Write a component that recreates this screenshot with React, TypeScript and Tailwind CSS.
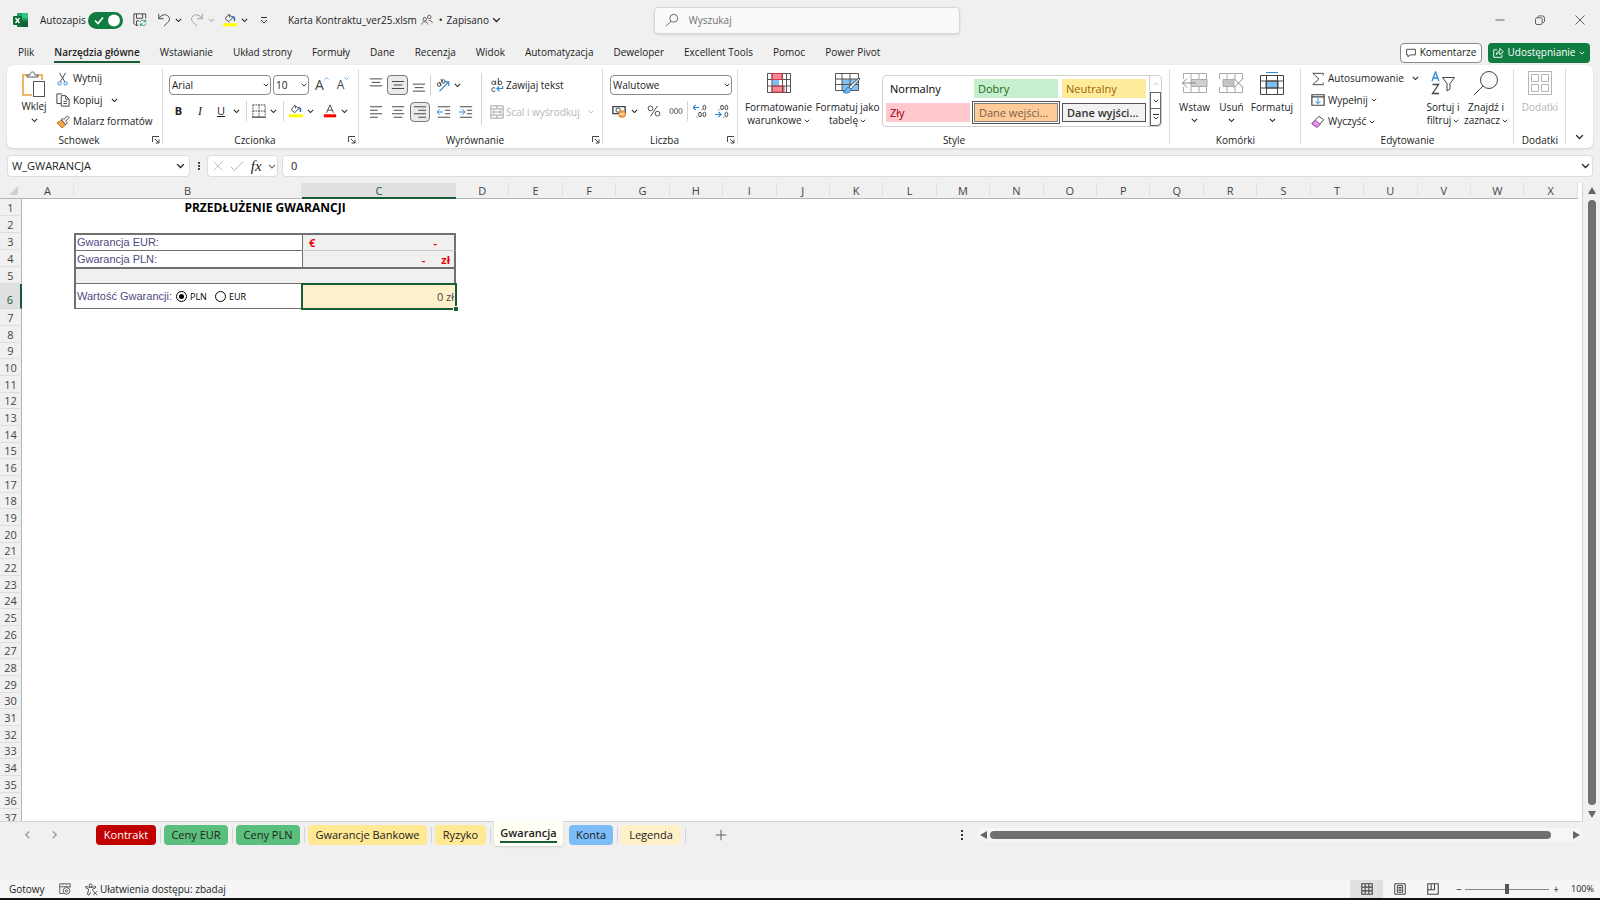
import type { ReactNode } from "react";

function Chev({ className = "w-[7px]" }: { className?: string }) {
    return (
        <svg viewBox="0 0 8 5" fill="none" stroke="currentColor" strokeWidth="1.2" className={`shrink-0 ${className}`}>
            <path d="M1 1l3 3 3-3" />
        </svg>
    )
}

function Icon({ size = 14, children, className = "" }: { size?: number, children: ReactNode, className?: string }) {
    return (
        <svg width={size} height={size} viewBox="0 0 16 16" fill="none" stroke="#444" strokeWidth="1.1" className={`shrink-0 ${className}`}>
            {children}
        </svg>
    )
}

function FillIcon() {
    return (
        <Icon>
            <path d="M7 1L2.500 6.500 6.500 10 11 5.500 7.500 2v3" />
            <path d="M10.500 4c2.500 0 3 2 2.500 5" stroke="#2563b8" strokeWidth="1.8" />
            <path d="M0 13.500h16" stroke="#ffff00" strokeWidth="3.500" />
        </Icon>
    )
}

function Lines({ rows }: { rows: number[][] }) {
    return (
        <Icon>
            {rows.map(([x, y, w]) => <path key={y} d={`M${x} ${y}h${w}`} />)}
        </Icon>
    )
}

function Divider({ className = "h-5" }: { className?: string }) {
    return <span className={`w-px shrink-0 bg-[#d4d4d4] ${className}`} />
}

function Group({ label, width, launcher = false, children }: { label: string, width: string, launcher?: boolean, children: ReactNode }) {
    return (
        <section aria-label={label} className={`relative flex flex-col ${width}`}>
            <div className="h-[67px]">{children}</div>
            <div className={`h-4 text-center leading-4 ${launcher ? "pr-3" : ""}`}>{label}</div>
            {launcher &&
                <button aria-label={`${label}: ustawienia`} className="absolute right-[3px] bottom-1">
                    <svg width="8" height="8" viewBox="0 0 8 8" fill="none" stroke="#444">
                        <path d="M.5 6V.5H7M3 3l4 4M7 3.500V7H3.500" />
                    </svg>
                </button>
            }
            <span className="absolute top-1 right-0 bottom-1 w-px bg-[#dadada]" />
        </section>
    )
}

function BigButton({ icon, lines, width, below = false, disabled = false }: { icon: ReactNode, lines: string[], width: string, below?: boolean, disabled?: boolean }) {
    return (
        <button disabled={disabled} className={`flex shrink-0 flex-col items-center ${width} ${disabled ? "text-[#b5b5b5]" : ""}`}>
            <span className="flex h-7 items-center">{icon}</span>
            <span className="mt-1 leading-[13px]">{lines[0]}</span>
            {below && <Chev className="mt-1 w-[7px]" />}
            {lines[1] &&
                <span className="flex items-center gap-[2px] leading-[13px]">{lines[1]}<Chev className="w-[6px]" /></span>
            }
        </button>
    )
}

function TitleBar() {
    return (
        <header className="grid h-10 grid-cols-[1fr_306px_1fr] items-center pl-[13px]">
            <div className="flex min-w-0 items-center whitespace-nowrap">
                <svg width="15" height="14" viewBox="0 0 15 14">
                    <rect x="4" width="11" height="14" rx="1" fill="#21a366" />
                    <path d="M9 0h5a1 1 0 011 1v4H9z" fill="#33c481" />
                    <path d="M4 7h11v6a1 1 0 01-1 1H5a1 1 0 01-1-1z" fill="#107c41" />
                    <path d="M9 9h6v4a1 1 0 01-1 1H9z" fill="#185c37" />
                    <rect y="3" width="9" height="9" rx="1" fill="#0e6b38" />
                    <path d="M2.500 5l4 5M6.500 5l-4 5" stroke="#fff" strokeWidth="1.300" />
                </svg>
                <label htmlFor="autosave" className="ml-3 w-[42px]">Autozapis</label>
                <span className="relative ml-[6px] h-[17px] w-[35px]">
                    <input id="autosave" type="checkbox" defaultChecked className="block h-full w-full appearance-none rounded-full bg-[#107c41]" />
                    <svg viewBox="0 0 35 17" className="pointer-events-none absolute inset-0">
                        <path d="M7 8.500l3 3 5-6" fill="none" stroke="#fff" strokeWidth="1.600" />
                        <circle cx="26" cy="8.500" r="6" fill="#fff" />
                    </svg>
                </span>
                <button aria-label="Zapisz" className="ml-[10px]">
                    <Icon>
                        <path d="M6 14H3l-2-2V1h13.500v5M4 1v5h7V1M4 14V9h3" />
                        <path d="M8 10.500c1-3 5-3 6.500-.5M14.500 7.500V10H12M15 12c-1 3-5 3-6.500.500M8.500 15v-2.500H11" stroke="#2a9d58" />
                    </Icon>
                </button>
                <button aria-label="Cofnij" className="ml-[10px] flex items-center gap-1">
                    <Icon className="-mt-px"><path d="M2 1v5.500h5.500M2 6.500C5 2 9 1 12 3c3.500 2.500 2.500 6 0 8l-4 4" /></Icon>
                    <Chev />
                </button>
                <button aria-label="Ponów" disabled className="ml-2 flex items-center gap-1 text-[#b0b0b0]">
                    <Icon className="opacity-50"><path d="M14 1v5.500H8.500M14 6.500C11 2 7 1 4 3 .5 5.500 1.500 9 4 11l4 4" /></Icon>
                    <Chev />
                </button>
                <button aria-label="Kolor wypełnienia" className="ml-2 flex items-center gap-1"><FillIcon /><Chev /></button>
                <button aria-label="Dostosuj" className="ml-3">
                    <svg width="8" height="8" viewBox="0 0 8 8" fill="none" stroke="#333"><path d="M1 1.500h6M1 4l3 3 3-3" /></svg>
                </button>
                <span className="ml-5">Karta Kontraktu_ver25.xlsm</span>
                <Icon size={12} className="ml-1">
                    <circle cx="5" cy="7" r="2.300" /><circle cx="11" cy="4" r="2.300" />
                    <path d="M1 14c0-5 8-5 8 0M10 9c2-1 5 0 5 3" />
                </Icon>
                <span className="ml-[6px]">•</span>
                <button className="ml-1 flex items-center gap-[3px]">Zapisano <Chev className="w-[9px]" /></button>
            </div>
            <div className="flex h-[27px] items-center rounded-sm border border-[#d6d6d6] bg-[#fafafa] px-[10px] shadow-sm">
                <Icon className="opacity-80"><circle cx="10" cy="6" r="4.500" /><path d="M7 9.500L1 15" /></Icon>
                <input aria-label="Wyszukaj" placeholder="Wyszukaj" className="ml-[10px] w-full bg-transparent outline-none placeholder:text-[#707070]" />
            </div>
            <div className="flex items-center justify-end gap-7 pr-[14px]">
                <button aria-label="Minimalizuj"><Icon size={12}><path d="M2 8h12" /></Icon></button>
                <button aria-label="Przywróć"><Icon size={12}><rect x="2" y="5" width="9" height="9" rx="2" /><path d="M5 4.500c0-1 1-2 2-2h4a3 3 0 013 3v4c0 1-1 2-2 2" /></Icon></button>
                <button aria-label="Zamknij"><Icon size={12}><path d="M2 2l12 12M14 2L2 14" /></Icon></button>
            </div>
        </header>
    )
}

const menu = ["Plik", "Narzędzia główne", "Wstawianie", "Układ strony", "Formuły", "Dane", "Recenzja", "Widok", "Automatyzacja", "Deweloper", "Excellent Tools", "Pomoc", "Power Pivot"];

function MenuBar() {
    return (
        <nav className="flex h-[25px] items-center pr-[10px] pl-[18px]">
            <div className="flex gap-5">
                {menu.map((item) =>
                    <button key={item} className={item === "Narzędzia główne" ? "border-b-2 border-[#185c37] font-semibold leading-[18px]" : "border-b-2 border-transparent leading-[18px]"}>{item}</button>
                )}
            </div>
            <div className="flex-auto" />
            <button className="flex h-5 w-[82px] items-center justify-center gap-1 rounded border border-[#8a8a8a] bg-white">
                <Icon size={10}><path d="M1 2h14v9H7l-4 3v-3H1z" strokeWidth="1.500" /></Icon>Komentarze
            </button>
            <button className="ml-[6px] flex h-5 w-[102px] items-center justify-center gap-1 rounded bg-[#107c41] text-white">
                <svg width="11" height="11" viewBox="0 0 16 16" fill="none" stroke="#fff" strokeWidth="1.300"><path d="M6 4H1v11h12v-4M5 11c0-4 3-5 5-5V2l5 5-5 4V8.500c-2 0-4 .5-5 2.500z" /></svg>
                Udostępnianie
                <Chev className="w-[6px]" />
            </button>
        </nav>
    )
}

function Clipboard() {
    return (
        <div className="flex pt-[6px] pl-3">
            <button className="flex w-[30px] flex-col items-center">
                <svg width="26" height="27" viewBox="0 0 26 27" fill="none">
                    <path d="M7 4H2v20h9M16 4h5v5" stroke="#e8a33d" strokeWidth="1.600" />
                    <path d="M6 6V4h3c0-4 5-4 5 0h3v2z" stroke="#555" fill="#fff" />
                    <rect x="12.500" y="10.500" width="11" height="15" stroke="#555" fill="#fff" />
                </svg>
                <span className="mt-[2px] leading-[13px]">Wklej</span>
                <Chev className="mt-[5px] w-[7px]" />
            </button>
            <div className="ml-[7px] flex flex-col">
                <button className="flex h-[21px] -mt-[3px] items-center gap-[3px]">
                    <Icon><path d="M4 1l6 10M11 1L5 11" /><circle cx="4" cy="13" r="1.900" stroke="#2b88d8" /><circle cx="11" cy="13" r="1.900" stroke="#2b88d8" /></Icon>
                    Wytnij
                </button>
                <button className="flex h-[22px] items-center gap-[3px]">
                    <Icon><path d="M6 12H1V1h6M6 3h5l4 4v8H6zM11 3v4h4M8.500 9.500h4M8.500 12h4" /></Icon>
                    Kopiuj<Chev className="ml-[6px] w-[7px]" />
                </button>
                <button className="flex h-[21px] items-center gap-[3px]">
                    <Icon><path d="M1 9l5-3 5 5-4 4z" fill="#f3a54b" stroke="#c8711a" /><path d="M6 5l5 6 2-2-2-2 4-4-2-2-4 4-1-1z" fill="#fff" /></Icon>
                    Malarz formatów
                </button>
            </div>
        </div>
    )
}

function FontGroup() {
    return (
        <div className="pt-[10px] pl-[6px]">
            <div className="flex items-center">
                <span className="relative">
                    <select aria-label="Czcionka" className="block h-5 w-[102px] appearance-none rounded border border-[#8a8a8a] bg-white pl-[2px]"><option>Arial</option></select>
                    <Chev className="pointer-events-none absolute top-2 right-[2px] w-[6px]" />
                </span>
                <span className="relative ml-[2px]">
                    <select aria-label="Rozmiar czcionki" className="block h-5 w-9 appearance-none rounded border border-[#8a8a8a] bg-white pl-[2px]"><option>10</option></select>
                    <Chev className="pointer-events-none absolute top-2 right-[2px] w-[6px]" />
                </span>
                <button aria-label="Zwiększ rozmiar" className="ml-[6px] flex text-[14px] leading-4 text-[#444]">A<Chev className="w-[5px] rotate-180 self-start text-[#2b88d8]" /></button>
                <button aria-label="Zmniejsz rozmiar" className="ml-2 flex text-[12px] leading-4 text-[#444]">A<Chev className="w-[5px] self-start text-[#2b88d8]" /></button>
            </div>
            <div className="-ml-px mt-[6px] flex h-5 items-center">
                <button className="w-[21px] text-[11px] font-bold">B</button>
                <button className="w-[22px] font-['Liberation_Serif',serif] text-[12px] italic">I</button>
                <button className="w-5 text-[11px] underline">U</button>
                <Chev className="ml-[2px] w-[7px]" />
                <Divider className="ml-[6px] h-5" />
                <button aria-label="Obramowania" className="ml-[5px] flex items-center gap-1">
                    <Icon><path d="M1 1h14v13M1 1v13M8 1v14M1 8h14" strokeDasharray="2 1" /><path d="M0 15h16" strokeWidth="1.500" /></Icon><Chev />
                </button>
                <Divider className="ml-[6px] h-5" />
                <button aria-label="Kolor wypełnienia komórki" className="ml-[5px] flex items-center gap-1"><FillIcon /><Chev /></button>
                <button aria-label="Kolor czcionki" className="ml-[9px] flex items-center gap-1">
                    <Icon><path d="M4 10l4-9 4 9M5.500 7h5" /><path d="M1 13.500h14" stroke="#f00" strokeWidth="3.500" /></Icon><Chev />
                </button>
            </div>
        </div>
    )
}

function Alignment() {
    return (
        <div className="flex pt-2 pl-2">
            <div className="w-[114px]">
                <div className="flex h-6 items-center">
                    <button aria-label="Do góry" className="w-5 pl-[2px]"><Lines rows={[[1, 1, 14], [3, 5, 10], [1, 9, 14]]} /></button>
                    <button aria-label="Do środka" className="flex h-5 w-[21px] items-center justify-center rounded border border-[#777] bg-[#ebebeb]"><Lines rows={[[1, 4, 14], [3, 8, 10], [1, 12, 14]]} /></button>
                    <button aria-label="Do dołu" className="ml-1 w-[18px]"><Lines rows={[[1, 7, 14], [3, 11, 10], [1, 15, 14]]} /></button>
                    <Divider className="h-5" />
                    <button aria-label="Orientacja" className="ml-[5px] flex items-center gap-1">
                        <Icon>
                            <circle cx="3.500" cy="7.500" r="2" /><path d="M4 4.500l2 4" />
                            <circle cx="8.500" cy="4" r="2" /><path d="M5.500 1l2 4" />
                            <path d="M4 15L14 5M10 4.500h4.500V9" stroke="#2b88d8" strokeWidth="1.400" />
                        </Icon><Chev />
                    </button>
                </div>
                <div className="mt-[3px] flex h-6 items-center">
                    <button aria-label="Do lewej" className="w-[22px] pl-[2px]"><Lines rows={[[1, 2, 14], [1, 6, 9], [1, 10, 14], [1, 14, 9]]} /></button>
                    <button aria-label="Wyśrodkuj" className="w-[21px] pl-[2px]"><Lines rows={[[1, 2, 14], [3, 6, 10], [1, 10, 14], [3, 14, 10]]} /></button>
                    <button aria-label="Do prawej" className="flex h-5 w-5 items-center justify-center rounded border border-[#777] bg-[#ebebeb]"><Lines rows={[[1, 2, 14], [6, 6, 9], [1, 10, 14], [6, 14, 9]]} /></button>
                    <button aria-label="Zmniejsz wcięcie" className="ml-[7px]"><Icon><path d="M1 2h14M9 6h6M9 10h6M1 14h14" /><path d="M0 8h7M3 5L0 8l3 3" stroke="#2b88d8" /></Icon></button>
                    <button aria-label="Zwiększ wcięcie" className="ml-2"><Icon><path d="M1 2h14M9 6h6M9 10h6M1 14h14" /><path d="M0 8h7M4 5l3 3-3 3" stroke="#2b88d8" /></Icon></button>
                </div>
            </div>
            <Divider className="h-[52px]" />
            <div className="pl-2">
                <button className="flex h-6 items-center gap-[2px]">
                    <Icon>
                        <circle cx="4" cy="5.500" r="2" /><path d="M6.500 3v5M9.500 0v8M6 12a2.200 2.200 0 10 0 2.500" />
                        <circle cx="11.500" cy="5.500" r="2" />
                        <path d="M14.500 9v3H8M10.500 9.500L8 12l2.500 3" stroke="#2b88d8" strokeWidth="1.400" />
                    </Icon>
                    Zawijaj tekst
                </button>
                <button disabled className="mt-[3px] flex h-6 items-center gap-[2px] text-[#b5b5b5]">
                    <Icon className="opacity-50"><path d="M1 1h14v14H1zM1 4.500h14M1 11.500h14M8 1v3.500M8 11.500V15M3 8h10M5 6L3 8l2 2M11 6l2 2-2 2" /></Icon>
                    Scal i wyśrodkuj<Chev className="ml-[6px] w-[6px]" />
                </button>
            </div>
        </div>
    )
}

function NumberGroup() {
    return (
        <div className="pt-[10px] pl-[7px]">
            <span className="relative block w-[122px]">
                <select aria-label="Format liczb" className="block h-5 w-full appearance-none rounded border border-[#8a8a8a] bg-white pl-[2px]"><option>Walutowe</option></select>
                <Chev className="pointer-events-none absolute top-2 right-[2px] w-[6px]" />
            </span>
            <div className="mt-[6px] flex h-5 items-center pl-[2px]">
                <button aria-label="Waluta" className="flex items-center gap-[5px]">
                    <Icon><path d="M1 3h14v8H1z" strokeWidth="1.600" /><circle cx="7" cy="7" r="2.500" /><rect x="8" y="8" width="7" height="7" rx="2" fill="#f3a54b" stroke="#d67d1b" /><path d="M8.500 11.500h6" stroke="#fff" /></Icon><Chev />
                </button>
                <button aria-label="Procent" className="ml-[9px]"><Icon><circle cx="4" cy="5" r="2.700" /><circle cx="12" cy="11" r="2.700" /><path d="M12 2L4 14" /></Icon></button>
                <button aria-label="Zapis dziesiętny" className="ml-2 w-[14px]">
                    <svg width="14" height="8" viewBox="0 0 14 8" fill="none" stroke="#777"><ellipse cx="2.500" cy="4" rx="1.700" ry="2.700" /><ellipse cx="7" cy="4" rx="1.700" ry="2.700" /><ellipse cx="11.500" cy="4" rx="1.700" ry="2.700" /></svg>
                </button>
                <Divider className="ml-1 h-5" />
                <button aria-label="Zwiększ dziesiętne" className="ml-[5px]">
                    <Icon><ellipse cx="13" cy="4" rx="1.600" ry="2.600" /><ellipse cx="8" cy="12" rx="1.600" ry="2.600" /><ellipse cx="13" cy="12" rx="1.600" ry="2.600" /><path d="M4 15h1M9.500 6.500h1" /><path d="M0 4h7M3 1L0 4l3 3" stroke="#2b88d8" strokeWidth="1.400" /></Icon>
                </button>
                <button aria-label="Zmniejsz dziesiętne" className="ml-2">
                    <Icon><ellipse cx="8" cy="4" rx="1.600" ry="2.600" /><ellipse cx="13" cy="4" rx="1.600" ry="2.600" /><ellipse cx="13" cy="12" rx="1.600" ry="2.600" /><path d="M4 6.500h1M9.500 15h1" /><path d="M0 12h7M4 9l3 3-3 3" stroke="#2b88d8" strokeWidth="1.400" /></Icon>
                </button>
            </div>
        </div>
    )
}

const styles = [
    { name: "Normalny", look: "bg-white text-black" },
    { name: "Dobry", look: "bg-[#c6efce] text-[#1a6b1a]" },
    { name: "Neutralny", look: "bg-[#ffeb9c] text-[#9c6500]" },
    { name: "Zły", look: "bg-[#ffc7ce] text-[#9c0006]" },
    { name: "Dane wejści...", look: "bg-[#ffcc99] text-[#76604f] border border-[#7f7f7f] outline outline-[#555] outline-offset-1" },
    { name: "Dane wyjści...", look: "bg-[#f2f2f2] text-[#333] font-semibold border border-[#555]" },
];

function StylesGroup() {
    return (
        <div className="flex pt-1 pl-[6px]">
            <BigButton width="w-[69px]" lines={["Formatowanie", "warunkowe"]} icon={
                <svg width="24" height="20" viewBox="0 0 24 20" fill="none">
                    <path d="M5 .5h10v6H5zM5 13h12v6H5z" fill="#f58a94" /><path d="M5 6.500h7V13H5z" fill="#7cc0f5" />
                    <path d="M.5.5h23v19H.5zM.5 6.500h23M.5 13h23M5 .5v19M15.500.5v19M19.500.5v19" stroke="#555" />
                    <path d="M5 .5h10v6H5zM5 13h12v6H5z" stroke="#d9364a" />
                </svg>
            } />
            <BigButton width="w-[69px]" lines={["Formatuj jako", "tabelę"]} icon={
                <svg width="26" height="24" viewBox="0 0 26 24" fill="none">
                    <path d="M7 8h16v11H7z" fill="#83c0f2" />
                    <path d="M.5 2.500h23v17H.5zM.5 8h23M.5 13.500h23M7 2.500v17M15 2.500v17" stroke="#555" />
                    <path d="M24 7L14 16l2 2 9-10z" fill="#fff" stroke="#555" />
                    <path d="M14 16c-3 0-3 4-6 5 3 2 8 1 8-3z" fill="#6fb5ee" stroke="#2b78c0" />
                </svg>
            } />
            <div className="mt-[6px] mr-2 flex h-[52px] min-w-0 flex-1 overflow-hidden rounded border border-[#d0d0d0]">
                <div className="grid flex-1 grid-cols-3 gap-x-1 gap-y-1 py-[3px] pr-[3px] pl-[3px] text-[11px]">
                    {styles.map((s) =>
                        <button key={s.name} className={`h-[19px] truncate pl-1 text-left leading-none ${s.look}`}>{s.name}</button>
                    )}
                </div>
                <div className="flex w-3 flex-col border-l border-[#d0d0d0]">
                    <button aria-label="W górę" className="flex flex-1 items-center justify-center text-[#bbb]"><Chev className="w-[6px] rotate-180" /></button>
                    <button aria-label="W dół" className="flex flex-1 items-center justify-center border border-[#666]"><Chev className="w-[6px]" /></button>
                    <button aria-label="Więcej stylów" className="flex flex-1 flex-col items-center justify-center gap-px rounded-br border border-t-0 border-[#666]"><span className="h-px w-[6px] bg-[#333]" /><Chev className="w-[6px]" /></button>
                </div>
            </div>
        </div>
    )
}

function CellsGroup() {
    return (
        <div className="flex pt-1 pl-[5px]">
            <BigButton width="w-[39px]" below lines={["Wstaw"]} icon={
                <svg width="26" height="20" viewBox="0 0 26 20" fill="none" stroke="#aaa">
                    <path d="M1.500 6V.5h23V6M1.500 14v5.500h23V14M9 .5V6M17 .5V6M9 14v5.500M17 14v5.500" />
                    <path d="M9 6.500h16v7H9z" fill="#d0d0d0" /><path d="M0 10h14M5 5.500L.5 10 5 14.500" stroke="#888" />
                </svg>
            } />
            <BigButton width="w-[35px]" below lines={["Usuń"]} icon={
                <svg width="25" height="20" viewBox="0 0 25 20" fill="none" stroke="#aaa">
                    <path d="M.5 6V.5h23V6M.5 14v5.500h23V14M8 .5V6M16 .5V6M8 14v5.500M16 14v5.500" />
                    <path d="M4 6.500h11v7H4z" fill="#c4c4c4" /><path d="M15 5.500l9 9M24 5.500l-9 9" stroke="#888" />
                </svg>
            } />
            <BigButton width="w-[46px]" below lines={["Formatuj"]} icon={
                <svg width="24" height="24" viewBox="0 0 24 24" fill="none" stroke="#444">
                    <path d="M6 10h12v7H6z" fill="#7cc0f5" />
                    <path d="M.5 4.500h23v19H.5zM.5 10h23M.5 17h23M6.500 4.500v19M17.500 4.500v19" />
                    <path d="M6 1.500h12" stroke="#2b88d8" />
                </svg>
            } />
        </div>
    )
}

function EditGroup() {
    return (
        <div className="flex pl-[10px]">
            <div className="w-[112px] pt-[3px]">
                <button className="flex h-[21px] w-full items-center gap-[3px]">
                    <Icon><path d="M14 4V1.500H2L9 8l-7 6.500h12V12" /></Icon>Autosumowanie<span className="flex-auto" /><Chev className="mr-1 w-[7px]" />
                </button>
                <button className="flex h-[22px] items-center gap-[3px]">
                    <Icon><path d="M1 2h14v12H1zM1 4.500h14" strokeWidth="1.400" /><path d="M8 5.500V12M5 9.500L8 12l3-2.500" stroke="#2b88d8" /></Icon>Wypełnij<Chev className="w-[6px]" />
                </button>
                <button className="flex h-[21px] items-center gap-[3px]">
                    <Icon><path d="M1 10L9 1.500l5.500 4L7 14z" /><path d="M1 10l4-4 5.500 4.500L7 14z" fill="#e29be8" stroke="#a43bb0" /></Icon>Wyczyść<Chev className="w-[6px]" />
                </button>
            </div>
            <div className="flex pt-1">
                <BigButton width="w-10" lines={["Sortuj i", "filtruj"]} icon={
                    <svg width="25" height="24" viewBox="0 0 25 24" fill="none" stroke="#444">
                        <path d="M1 10L4.500 1 8 10M2.300 7h4.500" stroke="#2b88d8" strokeWidth="1.300" />
                        <path d="M1.500 13.500h6l-6 9h6.500" strokeWidth="1.300" />
                        <path d="M11.500 6.500h12l-4.500 6v5.500l-3 2v-7.500z" />
                    </svg>
                } />
                <BigButton width="w-[46px]" lines={["Znajdź i", "zaznacz"]} icon={
                    <svg width="26" height="26" viewBox="0 0 26 26" fill="none" stroke="#444"><circle cx="16" cy="10" r="8.500" fill="#fafafa" /><path d="M10 16l-9 9" /></svg>
                } />
            </div>
        </div>
    )
}

function Ribbon() {
    return (
        <div className="mx-[7px] flex h-[83px] rounded-md bg-white shadow">
            <Group label="Schowek" width="w-[156px]" launcher><Clipboard /></Group>
            <Group label="Czcionka" width="w-[196px]" launcher><FontGroup /></Group>
            <Group label="Wyrównanie" width="w-[244px]" launcher><Alignment /></Group>
            <Group label="Liczba" width="w-[135px]" launcher><NumberGroup /></Group>
            <Group label="Style" width="min-w-0 flex-1"><StylesGroup /></Group>
            <Group label="Komórki" width="w-[131px]"><CellsGroup /></Group>
            <Group label="Edytowanie" width="w-[213px]"><EditGroup /></Group>
            <Group label="Dodatki" width="w-[52px]">
                <div className="pt-1">
                    <BigButton width="w-full" disabled lines={["Dodatki"]} icon={
                        <svg width="24" height="24" viewBox="0 0 24 24" fill="none" stroke="#b5b5b5"><path d="M.5.5h23v23H.5zM3.500 3.500h7v7h-7zM13.500 3.500h7v7h-7zM3.500 13.500h7v7h-7zM13.500 13.500h7v7h-7z" /></svg>
                    } />
                </div>
            </Group>
            <button aria-label="Zwiń wstążkę" className="flex w-[27px] items-end justify-center pb-2"><Chev className="w-[9px]" /></button>
        </div>
    )
}

function FormulaBar() {
    return (
        <div className="mx-[7px] mt-[7px] mb-[6px] flex h-[22px] items-stretch text-[11px]">
            <div className="flex w-[183px] items-center rounded border border-[#dcdcdc] bg-white pr-1">
                <input aria-label="Pole nazwy" defaultValue="W_GWARANCJA" className="w-full min-w-0 bg-transparent pl-1 outline-none" />
                <Chev className="w-[9px]" />
            </div>
            <svg width="17" height="22" fill="#444"><path d="M8 7h2v2H8zM8 10h2v2H8zM8 13h2v2H8z" /></svg>
            <div className="flex w-[71px] items-center justify-between rounded border border-[#dcdcdc] bg-white pr-px pl-1">
                <button aria-label="Anuluj"><Icon size={12} className="opacity-40"><path d="M2 2l12 12M14 2L2 14" /></Icon></button>
                <button aria-label="Wpis"><Icon className="opacity-40"><path d="M1 9l4 4L15 3" /></Icon></button>
                <button aria-label="Wstaw funkcję" className="font-['Liberation_Serif',serif] text-[15px] leading-none italic">fx</button>
                <Chev className="w-[8px] text-[#777]" />
            </div>
            <div className="ml-1 flex flex-1 items-center rounded border border-[#dcdcdc] bg-white pr-[2px]">
                <input aria-label="Pasek formuły" defaultValue="0" className="w-full bg-transparent pl-2 outline-none" />
                <Chev className="w-[9px]" />
            </div>
        </div>
    )
}

const letters = "ABCDEFGHIJKLMNOPQRSTUVWX".split("");
const emptyRows = Array.from({ length: 31 }, (_, i) => i + 7);

function RowHead({ n, active = false }: { n: number, active?: boolean }) {
    return (
        <th scope="row" className={active
            ? "border-r-2 border-b border-r-[#185c37] border-b-[#d4d4d4] bg-[#e0e0e0] p-0 pt-[7px] font-normal text-[#185c37]"
            : "border-r border-b border-r-[#b5b5b5] border-b-[#dedede] bg-[#f0f0f0] p-0 font-normal"
        }>{n}</th>
    )
}

function Sheet() {
    return (
        <div className="min-w-0 flex-1 overflow-hidden border-r border-b border-[#d4d4d4] bg-white pr-1">
            <table className="w-full table-fixed border-separate border-spacing-0 text-[11px] leading-none text-[#444]">
                <colgroup>
                    <col className="w-[22px]" />
                    <col className="w-[52px]" />
                    <col className="w-[228px]" />
                    <col className="w-[154px]" />
                    {letters.slice(3).map((l) => <col key={l} />)}
                </colgroup>
                <thead>
                    <tr className="h-4 bg-[#f0f0f0]">
                        <th className="border-b border-[#b5b5b5] p-0"><svg width="9" height="9" viewBox="0 0 9 9" fill="#d0d0d0" className="ml-[9px]"><path d="M9 0v9H0z" /></svg></th>
                        {letters.map((l) =>
                            <th key={l} scope="col" className={l === "C"
                                ? "border-b-2 border-[#185c37] bg-[#e0e0e0] p-0 font-normal text-[#185c37]"
                                : "border-r border-b border-r-[#e2e2e2] border-b-[#b5b5b5] p-0 font-normal"
                            }>{l}</th>
                        )}
                    </tr>
                </thead>
                <tbody>
                    <tr className="h-[17px]">
                        <RowHead n={1} />
                        <td />
                        <td colSpan={2} className="p-0 text-center text-[12px] font-bold text-black">PRZEDŁUŻENIE GWARANCJI</td>
                        <td colSpan={21} />
                    </tr>
                    <tr className="h-[17px]"><RowHead n={2} /><td colSpan={24} /></tr>
                    <tr className="h-[17px]">
                        <RowHead n={3} />
                        <td />
                        <td className="border-t-2 border-l-2 border-[#707070] p-0 pl-px font-['Liberation_Sans',Arial,sans-serif] text-[#4f4a80]">Gwarancja EUR:</td>
                        <td className="border-t-2 border-r-2 border-l border-[#707070] bg-[#f0f0f0] p-0 pr-[17px] pl-[6px] font-bold text-[#f00000]">
                            <span className="flex justify-between"><span>€</span><span>-</span></span>
                        </td>
                        <td colSpan={21} />
                    </tr>
                    <tr className="h-[17px]">
                        <RowHead n={4} />
                        <td />
                        <td className="border-t border-l-2 border-[#707070] p-0 pl-px font-['Liberation_Sans',Arial,sans-serif] text-[#4f4a80]">Gwarancja PLN:</td>
                        <td className="border-t border-r-2 border-l border-[#707070] border-t-[#c8c8c8] bg-[#f0f0f0] p-0 pr-1 font-bold text-[#f00000]">
                            <span className="flex justify-end gap-4"><span>-</span><span>zł</span></span>
                        </td>
                        <td colSpan={21} />
                    </tr>
                    <tr className="h-[17px]">
                        <RowHead n={5} />
                        <td />
                        <td colSpan={2} className="border-t-2 border-r-2 border-b border-l-2 border-[#707070] bg-[#f0f0f0] p-0" />
                        <td colSpan={21} />
                    </tr>
                    <tr className="h-[25px]">
                        <RowHead n={6} active />
                        <td />
                        <td className="border-b border-l-2 border-[#707070] p-0 pl-px font-['Liberation_Sans',Arial,sans-serif] text-[#4f4a80]">
                            <div className="flex items-center">
                                <span className="w-[99px] whitespace-nowrap">Wartość Gwarancji:</span>
                                <input id="pln" type="radio" name="currency" defaultChecked className="h-[11px] w-[11px] appearance-none rounded-full border border-black bg-white checked:bg-black checked:bg-clip-content checked:p-[2px]" />
                                <label htmlFor="pln" className="ml-[3px] w-[25px] font-['Open_Sans',sans-serif] text-[9px] text-black">PLN</label>
                                <input id="eur" type="radio" name="currency" className="h-[11px] w-[11px] appearance-none rounded-full border border-black bg-white checked:bg-black checked:bg-clip-content checked:p-[2px]" />
                                <label htmlFor="eur" className="ml-[3px] font-['Open_Sans',sans-serif] text-[9px] text-black">EUR</label>
                            </div>
                        </td>
                        <td className="relative bg-[#fff0cc] p-0 pr-[2px] text-right outline-2 -outline-offset-1 outline-[#185c37]">
                            0 zł
                            <span className="absolute -right-[2px] -bottom-[2px] h-[5px] w-[5px] border-t border-l border-white bg-[#185c37]" />
                        </td>
                        <td colSpan={21} />
                    </tr>
                    {emptyRows.map((n) =>
                        <tr key={n} className={n % 3 === 0 ? "h-4" : "h-[17px]"}><RowHead n={n} /><td colSpan={24} /></tr>
                    )}
                </tbody>
            </table>
        </div>
    )
}

const sheets = [
    { name: "Kontrakt", look: "bg-[#c00000] text-white w-[60px]" },
    { name: "Ceny EUR", look: "bg-[#5abf7c] w-16" },
    { name: "Ceny PLN", look: "bg-[#5abf7c] w-16" },
    { name: "Gwarancje Bankowe", look: "bg-[#ffe994] w-[119px]" },
    { name: "Ryzyko", look: "bg-[#ffe994] w-[51px]" },
    { name: "Gwarancja", look: "" },
    { name: "Konta", look: "bg-[#7cbcf8] w-[44px]" },
    { name: "Legenda", look: "bg-[#fff0c8] w-[60px]" },
];

function SheetTabs() {
    return (
        <div className="flex h-[58px] items-start pr-[17px] text-[11px]">
            <div className="flex h-[25px] w-[96px] items-center gap-[18px] pl-[23px] text-[#999]">
                <button aria-label="Poprzedni arkusz"><Chev className="w-[9px] rotate-90" /></button>
                <button aria-label="Następny arkusz"><Chev className="w-[9px] -rotate-90" /></button>
            </div>
            <div className="flex items-start">
                {sheets.map((s) => s.look === ""
                    ? <button key={s.name} className="mr-[6px] -mt-px h-[25px] w-[69px] rounded-b bg-[#fffff4] font-semibold shadow-sm"><span className="border-b-2 border-[#185c37] pb-px">{s.name}</span></button>
                    : <span key={s.name} className="flex items-center pt-[3px]">
                        <button className={`mr-1 h-5 rounded whitespace-nowrap ${s.look}`}>{s.name}</button>
                        <Divider className="mr-[3px] h-4" />
                    </span>
                )}
            </div>
            <button aria-label="Nowy arkusz" className="mt-[7px] ml-[26px]"><Icon size={12}><path d="M8 1v14M1 8h14" /></Icon></button>
            <div className="flex-auto" />
            <svg width="6" height="25" fill="#333"><path d="M2 8h2v2H2zM2 12h2v2H2zM2 16h2v2H2z" /></svg>
            <div className="mt-[6px] ml-3 flex h-[14px] w-[606px] items-center rounded-full bg-[#f6f6f6] px-[3px]">
                <svg width="7" height="8" fill="#666"><path d="M7 0v8L0 4z" /></svg>
                <span className="ml-[3px] h-2 flex-1 rounded-full bg-[#707070]" />
                <svg width="7" height="8" fill="#666" className="ml-[22px]"><path d="M0 0v8l7-4z" /></svg>
            </div>
        </div>
    )
}

function StatusBar() {
    return (
        <footer className="flex h-5 items-center border-b-2 border-[#111] bg-[#f5f5f5] pl-[9px] pr-[7px]">
            <span className="w-[50px]">Gotowy</span>
            <Icon size={12}><path d="M1 5V1h14v5M1 5h14M1 5v9h5M5 2v1M10 2v1" /><circle cx="10" cy="10.500" r="4.500" /><circle cx="10" cy="10.500" r="1.500" /></Icon>
            <button className="ml-[14px] flex items-center gap-[2px] font-medium">
                <Icon size={13}><circle cx="7" cy="3" r="1.800" /><path d="M1 4c4 2 8 2 12 0v2L9.500 7.500v2M1 4v2l3.500 1.500L3 14l2 1 2-4M10 10l5 5M15 10l-5 5" /></Icon>
                Ułatwienia dostępu: zbadaj
            </button>
            <div className="flex-auto" />
            <button aria-label="Normalny" className="flex h-[18px] w-[33px] items-center justify-center bg-[#e0e0e0]"><Icon size={12}><path d="M1 1h14v14H1zM1 5.500h14M1 10.500h14M5.500 1v14M10.500 1v14" strokeWidth="1.400" /></Icon></button>
            <button aria-label="Układ strony" className="flex w-[33px] justify-center"><Icon size={12}><path d="M1 1h14v14H1zM4.500 3.500h7v9h-7zM6 6h4M6 8h4M6 10h4" strokeWidth="1.300" /></Icon></button>
            <button aria-label="Podział stron" className="flex w-[33px] justify-center"><Icon size={12}><path d="M1 1h14v14H1zM1 9h9V1M5.500 1v8" strokeWidth="1.400" /></Icon></button>
            <button aria-label="Pomniejsz" className="ml-1 w-3">−</button>
            <input type="range" aria-label="Powiększenie" defaultValue="50" className="h-3 w-[84px] appearance-none bg-[linear-gradient(#888,#888)] bg-[length:100%_1px] bg-center bg-no-repeat [&::-webkit-slider-thumb]:h-[10px] [&::-webkit-slider-thumb]:w-1 [&::-webkit-slider-thumb]:appearance-none [&::-webkit-slider-thumb]:bg-[#555]" />
            <button aria-label="Powiększ" className="w-[14px]">+</button>
            <span className="ml-2 w-[22px] text-[9px]">100%</span>
        </footer>
    )
}

export default function App() {
    return (
        <div className="flex h-screen flex-col overflow-hidden bg-[#f0f0f0] font-['Open_Sans',sans-serif] text-[10px] text-[#222] [&_button]:whitespace-nowrap">
            <TitleBar />
            <MenuBar />
            <Ribbon />
            <FormulaBar />
            <div className="flex min-h-0 flex-1">
                <Sheet />
                <div className="flex w-[17px] flex-col items-center py-1">
                    <svg width="8" height="7" fill="#666"><path d="M4 0l4 7H0z" /></svg>
                    <span className="my-[6px] w-2 flex-1 rounded-full bg-[#707070]" />
                    <svg width="8" height="7" fill="#666"><path d="M4 7l4-7H0z" /></svg>
                </div>
            </div>
            <SheetTabs />
            <StatusBar />
        </div>
    )
}
